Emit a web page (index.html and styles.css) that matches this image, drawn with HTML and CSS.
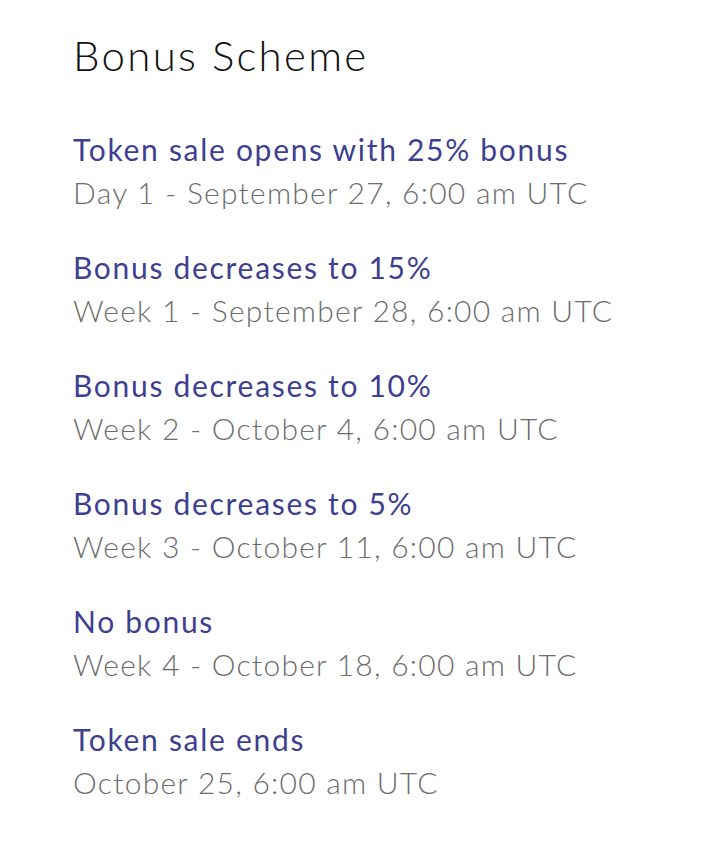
FILE: index.html
```html
<!DOCTYPE html>
<html>
<head>
<meta charset="utf-8">
<link rel="stylesheet" href="styles.css">
</head>
<body>
<div class="page">
  <h1 class="title">Bonus Scheme</h1>
  <ul class="list">
    <li class="item"><div class="head">Token sale opens with 25% bonus</div><div class="date">Day 1 - September 27, 6:00 am UTC</div></li>
    <li class="item"><div class="head">Bonus decreases to 15%</div><div class="date">Week 1 - September 28, 6:00 am UTC</div></li>
    <li class="item"><div class="head">Bonus decreases to 10%</div><div class="date">Week 2 - October 4, 6:00 am UTC</div></li>
    <li class="item"><div class="head">Bonus decreases to 5%</div><div class="date">Week 3 - October 11, 6:00 am UTC</div></li>
    <li class="item"><div class="head">No bonus</div><div class="date">Week 4 - October 18, 6:00 am UTC</div></li>
    <li class="item"><div class="head">Token sale ends</div><div class="date">October 25, 6:00 am UTC</div></li>
  </ul>
</div>
</body>
</html>
```
FILE: styles.css
```css
html, body { margin: 0; padding: 0; background: #fff; }
body { font-family: Lato, "Open Sans", sans-serif; }
.page { padding: 27px 0 0 73px; }
.title { margin: 0; font-weight: 300; font-size: 42px; line-height: 56px; letter-spacing: 2.3px; color: #111; }
.list { list-style: none; margin: 45px 0 0; padding: 0; display: flex; flex-direction: column; gap: 32px; }
.item { display: flex; flex-direction: column; }
.head { font-size: 30px; line-height: 43px; letter-spacing: 1.7px; color: #3e3f91; }
.date { font-size: 30px; line-height: 43px; letter-spacing: 1.25px; color: #6d6d6d; font-weight: 300; }
```
